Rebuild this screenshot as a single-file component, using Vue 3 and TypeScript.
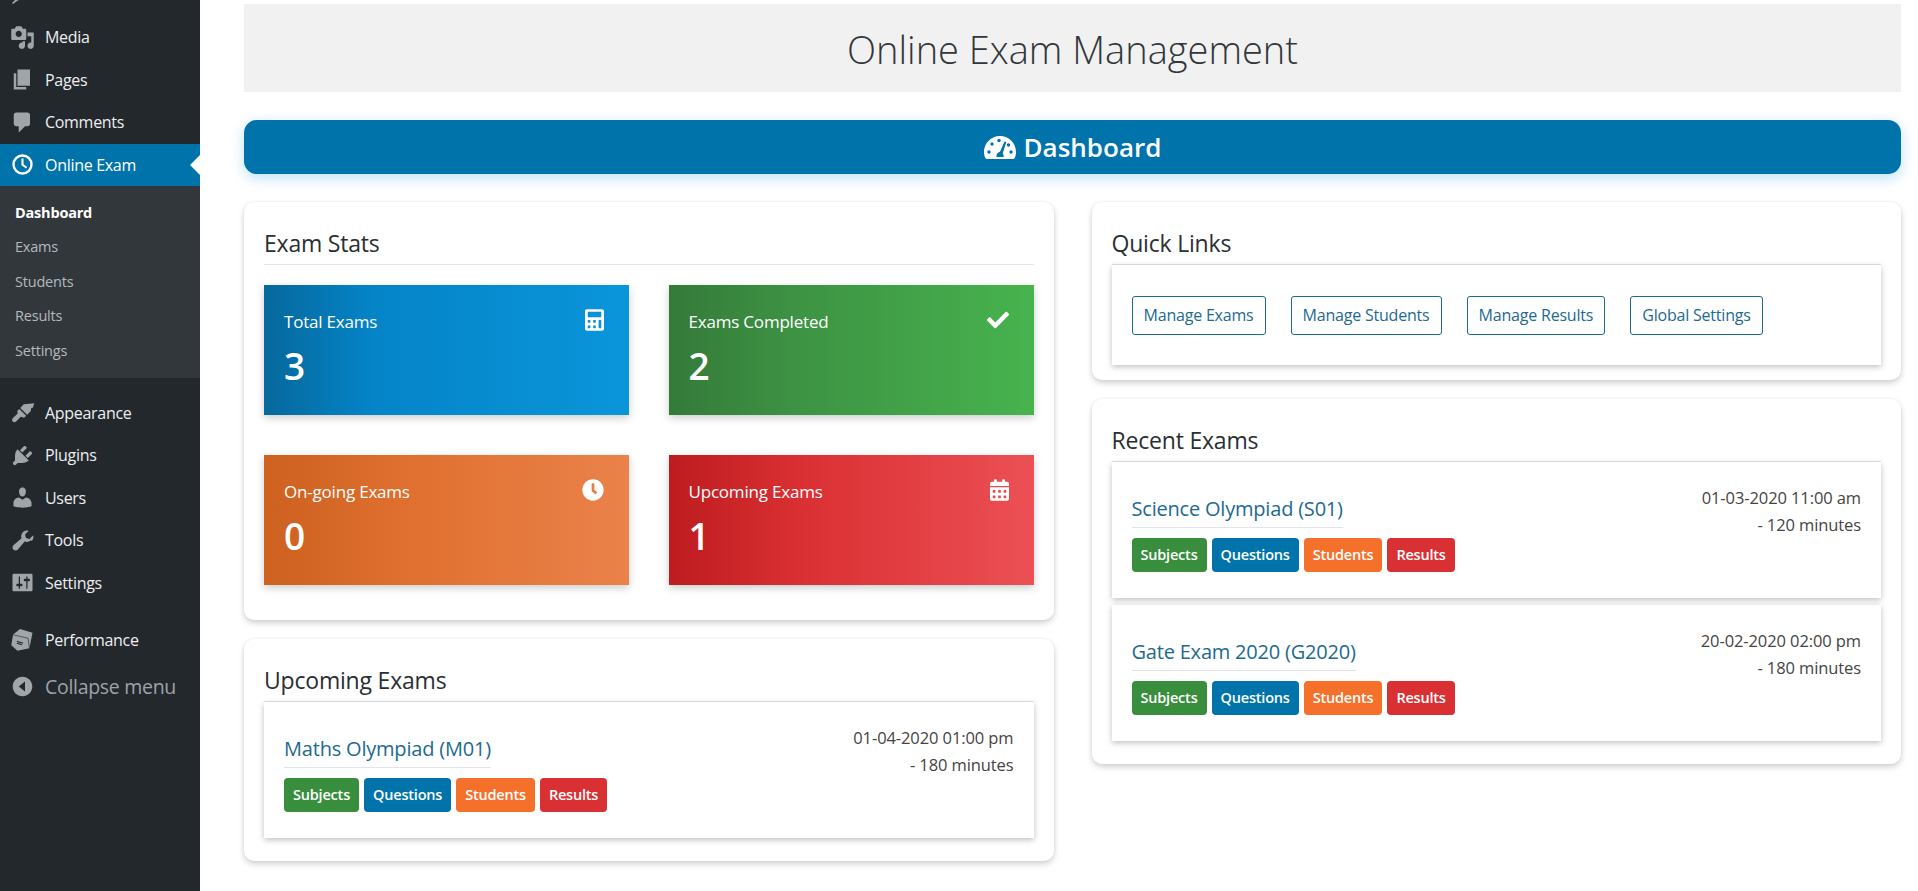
<script setup lang="ts">
const topMenu = [
  { label: 'Media', d: 'M13 11V4c0-.55-.45-1-1-1h-1.670L9 1H5L3.670 3H2c-.55 0-1 .45-1 1v7c0 .55.45 1 1 1h10c.55 0 1-.45 1-1zM7 4.500c1.380 0 2.500 1.120 2.500 2.500S8.380 9.500 7 9.500 4.500 8.380 4.500 7 5.620 4.500 7 4.500zM14 6h5v10.500c0 1.380-1.120 2.500-2.500 2.500S14 17.880 14 16.500s1.120-2.500 2.500-2.500c.17 0 .34.020.5.050V9h-3V6zm-4 8.050V13h2v3.500c0 1.380-1.120 2.500-2.500 2.500S7 17.880 7 16.500 8.120 14 9.500 14c.17 0 .34.020.5.050z' },
  { label: 'Pages', d: 'M6 15V2h10v13H6zm-1 1h8v2H3V5h2v11z' },
  { label: 'Comments', d: 'M5 2h9c1.100 0 2 .9 2 2v7c0 1.100-.9 2-2 2h-2l-5 5v-5H5c-1.100 0-2-.9-2-2V4c0-1.100.9-2 2-2z' }
]
const lowerMenu = [
  { label: 'Appearance', d: 'M19.500 2.500L11 3.400 8.200 6.300l5.500 5.500 2.800-2.900L17 6.400l1.200-.3zM7.400 7.100l5.500 5.500-1.600 1.600-2.700-.9-3.500 3.700c-.9.9-2.100 1-2.900.2s-.7-2 .2-2.900l3.700-3.500-.3-2z' },
  { label: 'Plugins', d: 'M13.110 4.360L9.870 7.600 8 5.730l3.240-3.240c.35-.34 1.050-.2 1.560.320.52.510.66 1.210.31 1.550zm-8 1.770l.91-1.120 9.010 9.010-1.190.84c-.71.710-2.630 1.160-3.820 1.160H6.140L4.900 17.260c-.59.590-1.540.59-2.120 0-.59-.58-.59-1.530 0-2.120l1.240-1.240v-3.880c0-1.130.4-3.050 1.090-3.890zm7.260 3.970l3.240-3.240c.34-.35 1.040-.21 1.550.31.52.510.66 1.210.31 1.550l-3.240 3.250z' },
  { label: 'Users', d: 'M10 9.250c-2.270 0-2.730-3.440-2.730-3.440C7 4.020 7.820 2 9.970 2c2.160 0 2.980 2.020 2.710 3.810 0 0-.41 3.440-2.680 3.440zm0 2.570L12.720 10c2.390 0 4.520 2.330 4.520 4.530v2.490s-3.650 1.130-7.240 1.130c-3.650 0-7.240-1.130-7.240-1.130v-2.490c0-2.250 1.940-4.480 4.470-4.480z' },
  { label: 'Tools', d: 'M16.680 9.770c-1.340 1.340-3.300 1.670-4.950.99l-5.410 6.520c-.99.990-2.590.990-3.580 0s-.99-2.590 0-3.570l6.520-5.420c-.68-1.650-.35-3.610.99-4.950 1.280-1.280 3.120-1.640 4.720-1.110l-2.940 2.920.75 2.810 2.810.75 2.920-2.940c.53 1.600.17 3.440-1.110 4.720z' },
  { label: 'Settings', d: 'M18 16V4c0-.55-.45-1-1-1H3c-.55 0-1 .45-1 1v12c0 .55.45 1 1 1h14c.55 0 1-.45 1-1zM8 11h1c.55 0 1 .45 1 1s-.45 1-1 1H8v1.500c0 .28-.22.5-.5.5s-.5-.22-.5-.5V13H6c-.55 0-1-.45-1-1s.45-1 1-1h1V5.500c0-.28.22-.5.5-.5s.5.22.5.5V11zm5-2h-1c-.55 0-1-.45-1-1s.45-1 1-1h1V5.500c0-.28.22-.5.5-.5s.5.22.5.5V7h1c.55 0 1 .45 1 1s-.45 1-1 1h-1v5.500c0 .28-.22.5-.5.5s-.5-.22-.5-.5V9z' }
]
const subMenu = ['Dashboard', 'Exams', 'Students', 'Results', 'Settings']
const stats = [
  { label: 'Total Exams', value: 3, cls: 'blue', vb: '0 0 448 512', w: 19, h: 22, d: 'M400 0H48C22.400 0 0 22.400 0 48v416c0 25.600 22.400 48 48 48h352c25.600 0 48-22.400 48-48V48c0-25.600-22.400-48-48-48zM128 435.200c0 6.400-6.400 12.800-12.800 12.800H76.800c-6.400 0-12.800-6.400-12.800-12.800v-38.400c0-6.400 6.400-12.800 12.800-12.800h38.400c6.400 0 12.800 6.400 12.800 12.800v38.400zm0-128c0 6.400-6.400 12.800-12.800 12.800H76.800c-6.400 0-12.800-6.400-12.800-12.800v-38.400c0-6.400 6.400-12.800 12.800-12.800h38.400c6.400 0 12.800 6.400 12.800 12.800v38.400zm128 128c0 6.400-6.400 12.800-12.800 12.800h-38.400c-6.400 0-12.800-6.400-12.800-12.800v-38.400c0-6.400 6.400-12.800 12.800-12.800h38.400c6.400 0 12.800 6.400 12.800 12.800v38.400zm0-128c0 6.400-6.400 12.800-12.800 12.800h-38.400c-6.400 0-12.800-6.400-12.800-12.800v-38.400c0-6.400 6.400-12.800 12.800-12.800h38.400c6.400 0 12.800 6.400 12.800 12.800v38.400zm128 128c0 6.400-6.400 12.800-12.800 12.800h-38.400c-6.400 0-12.800-6.400-12.800-12.800V268.800c0-6.400 6.400-12.800 12.800-12.800h38.400c6.400 0 12.800 6.400 12.800 12.800v166.400zm0-256c0 6.400-6.400 12.800-12.800 12.800H76.800c-6.400 0-12.800-6.400-12.800-12.800V76.800C64 70.400 70.400 64 76.800 64h294.400c6.400 0 12.800 6.400 12.800 12.800v102.400z' },
  { label: 'Exams Completed', value: 2, cls: 'green', vb: '0 0 512 512', w: 22, h: 22, d: 'M173.898 439.404l-166.400-166.400c-9.997-9.997-9.997-26.206 0-36.204l36.203-36.204c9.997-9.998 26.207-9.998 36.204 0L192 312.690 432.095 72.596c9.997-9.997 26.207-9.997 36.204 0l36.203 36.204c9.997 9.997 9.997 26.206 0 36.204l-294.400 294.401c-9.998 9.997-26.207 9.997-36.204-.001z' },
  { label: 'On-going Exams', value: 0, cls: 'orange', vb: '0 0 512 512', w: 22, h: 22, d: 'M256,8C119,8,8,119,8,256S119,504,256,504,504,393,504,256,393,8,256,8Zm92.490,313h0l-20,25a16,16,0,0,1-22.490,2.500h0l-67-49.720a40,40,0,0,1-15-31.230V112a16,16,0,0,1,16-16h32a16,16,0,0,1,16,16V256l58,42.500A16,16,0,0,1,348.490,321Z' },
  { label: 'Upcoming Exams', value: 1, cls: 'red', vb: '0 0 448 512', w: 19, h: 22, d: 'M0 464c0 26.500 21.500 48 48 48h352c26.500 0 48-21.500 48-48V192H0v272zm320-196c0-6.600 5.400-12 12-12h40c6.600 0 12 5.400 12 12v40c0 6.600-5.400 12-12 12h-40c-6.600 0-12-5.400-12-12v-40zm0 128c0-6.600 5.400-12 12-12h40c6.600 0 12 5.400 12 12v40c0 6.600-5.400 12-12 12h-40c-6.600 0-12-5.400-12-12v-40zM192 268c0-6.600 5.400-12 12-12h40c6.600 0 12 5.400 12 12v40c0 6.600-5.400 12-12 12h-40c-6.600 0-12-5.400-12-12v-40zm0 128c0-6.600 5.400-12 12-12h40c6.600 0 12 5.400 12 12v40c0 6.600-5.400 12-12 12h-40c-6.600 0-12-5.400-12-12v-40zM64 268c0-6.600 5.400-12 12-12h40c6.600 0 12 5.400 12 12v40c0 6.600-5.400 12-12 12H76c-6.600 0-12-5.400-12-12v-40zm0 128c0-6.600 5.400-12 12-12h40c6.600 0 12 5.400 12 12v40c0 6.600-5.400 12-12 12H76c-6.600 0-12-5.400-12-12v-40zM400 64h-48V16c0-8.800-7.200-16-16-16h-32c-8.800 0-16 7.200-16 16v48H160V16c0-8.800-7.200-16-16-16h-32c-8.800 0-16 7.200-16 16v48H48C21.500 64 0 85.500 0 112v48h448v-48c0-26.500-21.500-48-48-48z' }
]
const actions = [
  { label: 'Subjects', cls: 'a-green' },
  { label: 'Questions', cls: 'a-blue' },
  { label: 'Students', cls: 'a-orange' },
  { label: 'Results', cls: 'a-red' }
]
const quickLinks = ['Manage Exams', 'Manage Students', 'Manage Results', 'Global Settings']
const upcoming = [{ title: 'Maths Olympiad (M01)', date: '01-04-2020 01:00 pm', mins: '- 180 minutes' }]
const recent = [
  { title: 'Science Olympiad (S01)', date: '01-03-2020 11:00 am', mins: '- 120 minutes' },
  { title: 'Gate Exam 2020 (G2020)', date: '20-02-2020 02:00 pm', mins: '- 180 minutes' }
]
</script>

<template>
  <div class="page">
    <aside class="sidebar">
      <svg class="sliver" viewBox="0 0 14 4" width="14" height="4"><path d="M1 4L5 1 7 0H3L0 3z" fill="#a0a5aa" /></svg>
      <a v-for="m in topMenu" :key="m.label" class="menu-row">
        <svg class="dash" viewBox="0 0 20 20"><path :d="m.d" fill-rule="evenodd" /></svg>
        <span>{{ m.label }}</span>
      </a>
      <a class="menu-row current">
        <svg class="dash" viewBox="0 0 20 20">
          <circle cx="10" cy="10" r="7.200" fill="none" stroke="#fff" stroke-width="1.900" />
          <path d="M10 5.200v5l3.300 2.400" fill="none" stroke="#fff" stroke-width="1.700" />
        </svg>
        <span>Online Exam</span>
        <i class="pointer"></i>
      </a>
      <ul class="submenu">
        <li v-for="(s, i) in subMenu" :key="s" :class="{ on: i === 0 }">{{ s }}</li>
      </ul>
      <a v-for="m in lowerMenu" :key="m.label" class="menu-row">
        <svg class="dash" viewBox="0 0 20 20"><path :d="m.d" fill-rule="evenodd" /></svg>
        <span>{{ m.label }}</span>
      </a>
      <a class="menu-row perf">
        <svg class="dash" viewBox="0 0 20 20">
          <path d="M8 1.500l10 3-2.500 12.500L6 19l-5-4.500L2.500 6z" />
          <path d="M2.700 6.300L14.500 9l1 7.700" fill="none" stroke="#23282d" stroke-width=".5" />
          <path d="M5.500 11.500l5 1.500M5.500 13l4 1.200" stroke="#23282d" stroke-width=".9" />
        </svg>
        <span>Performance</span>
      </a>
      <a class="menu-row collapse">
        <svg class="dash" viewBox="0 0 20 20"><path d="M10 2.160c4.330 0 7.840 3.510 7.840 7.840s-3.510 7.840-7.840 7.840S2.160 14.330 2.160 10 5.670 2.160 10 2.160zM12 14V6l-5 4z" fill-rule="evenodd" fill="#a0a5aa" /></svg>
        <span>Collapse menu</span>
      </a>
    </aside>

    <main class="main">
      <h1 class="page-title">Online Exam Management</h1>
      <div class="bar">
        <svg class="gauge" viewBox="0 0 32 23" width="32" height="23">
          <path d="M16 0C7 0 0 7 0 16c0 2.500.5 4.700 1.500 6.300.3.500.8.700 1.300.7h26.400c.5 0 1-.2 1.300-.7C31.500 20.700 32 18.500 32 16 32 7 25 0 16 0z" fill="#fff" />
          <g fill="#0073aa">
            <circle cx="5" cy="16" r="1.700" /><circle cx="8" cy="8" r="1.700" /><circle cx="15" cy="4.500" r="1.700" /><circle cx="27" cy="16" r="1.700" /><circle cx="24.500" cy="9" r="1.700" />
            <path d="M20.500 5.500l1.800.5-3.600 11.500c.8 1 1.100 2.200 1 3.500h-7.200c-.4-2.500 1-4.800 3.500-5.200z" />
          </g>
        </svg>
        <span>Dashboard</span>
      </div>

      <div class="columns">
        <div class="col">
          <section class="card stats-card">
            <h2 class="card-title">Exam Stats</h2>
            <div class="stats">
              <div v-for="s in stats" :key="s.label" class="stat" :class="s.cls">
                <div>
                  <div class="stat-label">{{ s.label }}</div>
                  <div class="stat-value">{{ s.value }}</div>
                </div>
                <svg class="stat-icon" :viewBox="s.vb" :width="s.w" :height="s.h"><path :d="s.d" fill="#fff" fill-rule="evenodd" /></svg>
              </div>
            </div>
          </section>

          <section class="card">
            <h2 class="card-title">Upcoming Exams</h2>
            <div v-for="e in upcoming" :key="e.title" class="exam">
              <div class="exam-main">
                <a class="exam-title">{{ e.title }}</a>
                <div class="actions">
                  <a v-for="a in actions" :key="a.label" class="action" :class="a.cls">{{ a.label }}</a>
                </div>
              </div>
              <div class="exam-when">
                <div class="when-date">{{ e.date }}</div>
                <div class="when-mins">{{ e.mins }}</div>
              </div>
            </div>
          </section>
        </div>

        <div class="col">
          <section class="card quick-card">
            <h2 class="card-title">Quick Links</h2>
            <div class="quick">
              <a v-for="q in quickLinks" :key="q" class="quick-link">{{ q }}</a>
            </div>
          </section>

          <section class="card">
            <h2 class="card-title">Recent Exams</h2>
            <div class="exam-list">
              <div v-for="e in recent" :key="e.title" class="exam">
                <div class="exam-main">
                  <a class="exam-title">{{ e.title }}</a>
                  <div class="actions">
                    <a v-for="a in actions" :key="a.label" class="action" :class="a.cls">{{ a.label }}</a>
                  </div>
                </div>
                <div class="exam-when">
                  <div class="when-date">{{ e.date }}</div>
                  <div class="when-mins">{{ e.mins }}</div>
                </div>
              </div>
            </div>
          </section>
        </div>
      </div>
    </main>
  </div>
</template>

<style scoped>
.page {
  display: flex;
  min-height: 891px;
  background: #fff;
  font-family: "Open Sans", "Noto Sans", sans-serif;
  color: #333;
}
.sidebar {
  position: relative;
  flex: 0 0 200px;
  background: #23282d;
  padding-top: 16px;
  box-sizing: border-box;
}
.sliver { position: absolute; left: 12px; top: 0; }
.menu-row {
  display: flex;
  align-items: center;
  position: relative;
  height: 42.500px;
  padding-left: 10px;
  color: #eee;
  font-size: 16px;
  letter-spacing: -0.3px;
}
.menu-row .dash {
  width: 25px;
  height: 25px;
  margin-right: 10px;
  fill: #a0a5aa;
  flex: none;
}
.menu-row.current {
  height: 42px;
  background: #0073aa;
  color: #fff;
}
.pointer {
  position: absolute;
  right: 0;
  top: 11px;
  border: 10px solid transparent;
  border-right-color: #fff;
  border-left-width: 0;
}
.submenu {
  margin: 0 0 14px;
  padding: 10px 0 9.500px;
  list-style: none;
  background: #32373c;
}
.submenu li {
  height: 34.500px;
  line-height: 34.500px;
  padding-left: 15px;
  font-size: 14.500px;
  letter-spacing: -0.2px;
  color: #b4b9be;
}
.submenu li.on {
  color: #fff;
  font-weight: 700;
}
.perf { margin-top: 14.500px; }
.collapse {
  margin-top: 4px;
  color: #9ea3a8;
  font-size: 19.500px;
  letter-spacing: -0.3px;
}
.main {
  flex: 1;
  min-width: 0;
  padding: 4px 17px 0 44px;
}
.page-title {
  margin: 0 0 28px;
  height: 88px;
  line-height: 90px;
  background: #f1f1f1;
  text-align: center;
  font-size: 38px;
  font-weight: 300;
  color: #32373c;
}
.bar {
  display: flex;
  align-items: center;
  justify-content: center;
  gap: 8px;
  height: 54px;
  margin-bottom: 28px;
  border-radius: 13px;
  background: #0073aa;
  color: #fff;
  font-size: 26px;
  font-weight: 600;
  box-shadow: 0 4px 14px rgba(60, 170, 235, 0.35);
}
.gauge { flex: none; }
.columns {
  display: grid;
  grid-template-columns: 1fr 1fr;
  column-gap: 38px;
  align-items: start;
}
.col {
  display: flex;
  flex-direction: column;
  gap: 19px;
}
.card {
  padding: 20px 20px 23px;
  background: #fff;
  border-radius: 10px;
  box-shadow: 0 3px 6px rgba(0, 0, 0, 0.18), 0 0 3px rgba(0, 0, 0, 0.06);
}
.stats-card { padding-bottom: 35px; }
.quick-card { padding-bottom: 15px; }
.card-title {
  margin: 0;
  height: 42px;
  line-height: 42px;
  border-bottom: 1px solid #e2e4e7;
  font-size: 23px;
  font-weight: 500;
  letter-spacing: -0.2px;
  color: #2a2f33;
}
.stats {
  display: grid;
  grid-template-columns: 365px 365px;
  justify-content: space-between;
  row-gap: 40px;
  margin-top: 20px;
}
.stat {
  display: flex;
  justify-content: space-between;
  align-items: flex-start;
  height: 130px;
  padding: 24px 25px 0 20px;
  box-sizing: border-box;
  color: #fff;
  box-shadow: 0 3px 8px rgba(0, 0, 0, 0.2);
}
.stat.blue { background: linear-gradient(to right, #06689c, #0584c8 30%, #0a95da); }
.stat.green { background: linear-gradient(to right, #347a3a, #3d9343 35%, #47b34e); }
.stat.orange { background: linear-gradient(to right, #cd6120, #e0702f 40%, #ea824b); }
.stat.red { background: linear-gradient(to right, #bd1c1f, #d92f32 35%, #ec5055); }
.stat-label {
  font-size: 17px;
  line-height: 26px;
  letter-spacing: -0.2px;
}
.stat-value {
  margin-top: 6px;
  font-size: 37px;
  line-height: 50px;
  font-weight: 600;
}
.blue .stat-icon, .orange .stat-icon, .red .stat-icon, .green .stat-icon { flex: none; margin-top: 0; }
.quick {
  display: flex;
  gap: 25px;
  padding: 31px 20px 30px;
  box-shadow: 0 2px 6px rgba(0, 0, 0, 0.25);
}
.quick-link {
  height: 39px;
  line-height: 37px;
  padding: 0 11px;
  box-sizing: border-box;
  border: 1px solid #1d6a8f;
  border-radius: 3px;
  color: #1d6a8f;
  font-size: 16px;
  letter-spacing: -0.2px;
  white-space: nowrap;
}
.exam-list {
  display: flex;
  flex-direction: column;
  gap: 7px;
}
.exam {
  display: flex;
  justify-content: space-between;
  align-items: flex-start;
  padding: 0 20px;
  box-shadow: 0 2px 6px rgba(0, 0, 0, 0.25);
}
.exam-main { padding: 30px 0 26px; }
.exam-title {
  display: inline-block;
  height: 35px;
  line-height: 34px;
  border-bottom: 1px solid #e2e4e7;
  color: #1d6a8f;
  font-size: 20px;
  letter-spacing: -0.2px;
}
.actions {
  display: flex;
  gap: 5px;
  margin-top: 10px;
}
.action {
  height: 34px;
  line-height: 33px;
  padding: 0 9px;
  border-radius: 4px;
  color: #fff;
  font-size: 14.500px;
  font-weight: 600;
  letter-spacing: -0.2px;
}
.a-green { background: #388e3c; }
.a-blue { background: #0073aa; }
.a-orange { background: #f5702a; }
.a-red { background: #d93033; }
.exam-when {
  padding-top: 22px;
  text-align: right;
  font-size: 16.500px;
  line-height: 27px;
  letter-spacing: -0.1px;
  color: #444;
}
.when-date { font-weight: 500; }
</style>

<style>
html, body { margin: 0; background: #fff; }
</style>
